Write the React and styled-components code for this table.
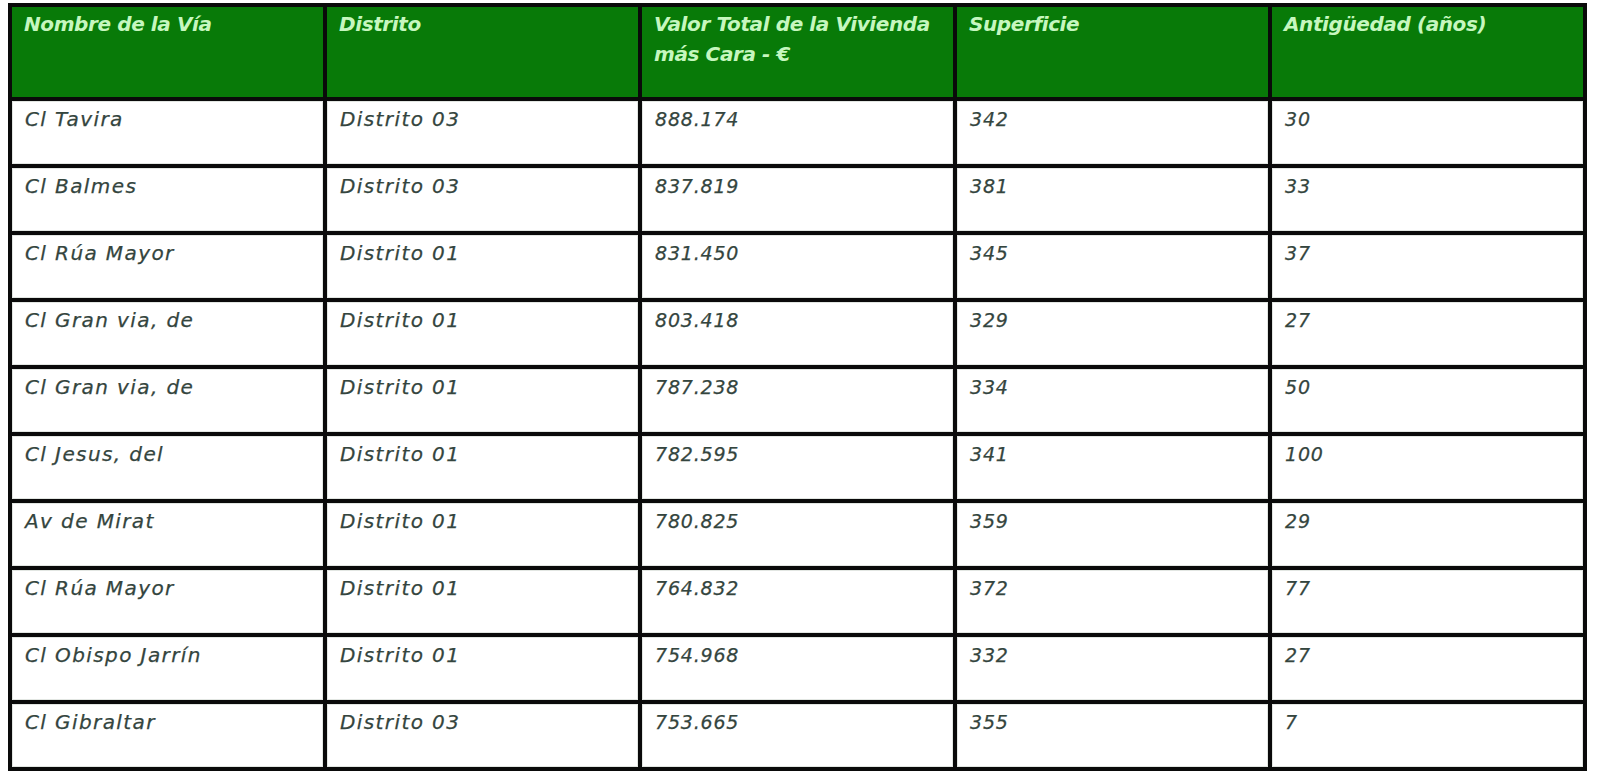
import React from "react";
import styled, { createGlobalStyle } from "styled-components";

const Global = createGlobalStyle`
  html, body { margin: 0; padding: 0; background: #ffffff; }
  body { font-family: "DejaVu Sans", Verdana, sans-serif; }
`;

const Page = styled.div`
  padding: 3px 0 0 8px;
`;

const Table = styled.div`
  display: grid;
  grid-template-columns: repeat(5, 311px);
  grid-template-rows: 90px repeat(10, 63px);
  gap: 4px;
  padding: 4px;
  background: #0a0a0a;
  width: max-content;
`;

const HeadCell = styled.div`
  background: #087a08;
  color: #c6f7bf;
  font-weight: bold;
  font-style: italic;
  font-size: 20px;
  line-height: 30px;
  padding: 2px 10px 0 12px;
  letter-spacing: -0.4px;
`;

const Cell = styled.div`
  background: #ffffff;
  box-shadow: inset 0 0 0 1px #e2e6e2;
  color: #34453e;
  font-style: italic;
  font-size: ${(p) => (p.$numeric ? "19px" : "20px")};
  letter-spacing: ${(p) => (p.$numeric ? "0.8px" : "1.4px")};
  padding: 6px 12px 0 13px;
  line-height: 24px;
  -webkit-text-stroke: 0.25px #34453e;
`;

const headers = [
  "Nombre de la Vía",
  "Distrito",
  "Valor Total de la Vivienda más Cara - €",
  "Superficie",
  "Antigüedad (años)",
];

const rows = [
  ["Cl Tavira", "Distrito 03", "888.174", "342", "30"],
  ["Cl Balmes", "Distrito 03", "837.819", "381", "33"],
  ["Cl Rúa Mayor", "Distrito 01", "831.450", "345", "37"],
  ["Cl Gran via, de", "Distrito 01", "803.418", "329", "27"],
  ["Cl Gran via, de", "Distrito 01", "787.238", "334", "50"],
  ["Cl Jesus, del", "Distrito 01", "782.595", "341", "100"],
  ["Av de Mirat", "Distrito 01", "780.825", "359", "29"],
  ["Cl Rúa Mayor", "Distrito 01", "764.832", "372", "77"],
  ["Cl Obispo Jarrín", "Distrito 01", "754.968", "332", "27"],
  ["Cl Gibraltar", "Distrito 03", "753.665", "355", "7"],
];

export default function App() {
  return (
    <>
      <Global />
      <Page>
        <Table>
          {headers.map((h) => (
            <HeadCell key={h}>{h}</HeadCell>
          ))}
          {rows.map((r, i) =>
            r.map((c, j) => (
              <Cell key={i + "-" + j} $numeric={j >= 2}>
                {c}
              </Cell>
            ))
          )}
        </Table>
      </Page>
    </>
  );
}
